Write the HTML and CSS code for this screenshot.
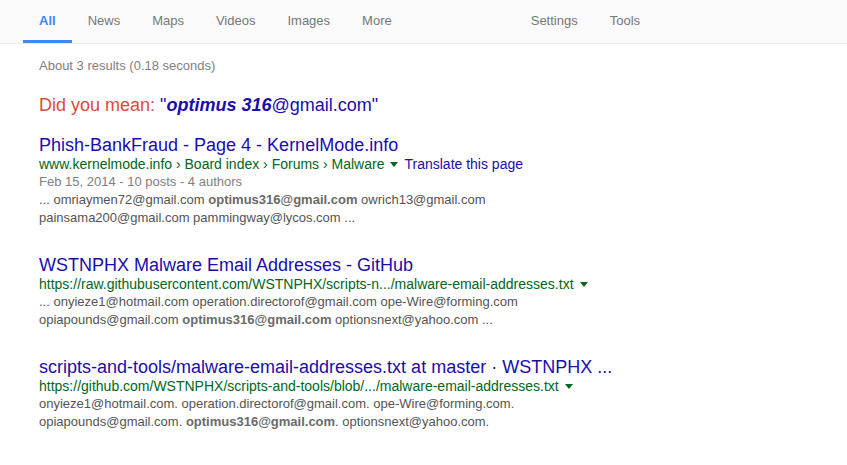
FILE: index.html
```html
<!DOCTYPE html>
<html>
<head>
<meta charset="utf-8">
<link rel="stylesheet" href="styles.css">
</head>
<body>
<div class="header">
  <nav class="tabs">
    <a class="tab active">All</a>
    <a class="tab">News</a>
    <a class="tab">Maps</a>
    <a class="tab">Videos</a>
    <a class="tab">Images</a>
    <a class="tab">More</a>
  </nav>
  <nav class="tabs right">
    <a class="tab">Settings</a>
    <a class="tab">Tools</a>
  </nav>
</div>
<div class="main">
  <div class="stats">About 3 results (0.18 seconds)</div>
  <div class="spell"><span class="red">Did you mean: </span><span class="sugg">"<b><i>optimus 316</i></b>@gmail.com"</span></div>

  <div class="result">
    <div class="title">Phish-BankFraud - Page 4 - KernelMode.info</div>
    <div class="url">www.kernelmode.info › Board index › Forums › Malware<span class="arrow"></span><span class="translate">Translate this page</span></div>
    <div class="st"><span class="date">Feb 15, 2014 - 10 posts - 4 authors</span></div>
    <div class="st">... omriaymen72@gmail.com <b>optimus316@gmail.com</b> owrich13@gmail.com<br>painsama200@gmail.com pammingway@lycos.com ...</div>
  </div>

  <div class="result">
    <div class="title">WSTNPHX Malware Email Addresses - GitHub</div>
    <div class="url">https://raw.githubusercontent.com/WSTNPHX/scripts-n.../malware-email-addresses.txt<span class="arrow"></span></div>
    <div class="st">... onyieze1@hotmail.com operation.directorof@gmail.com ope-Wire@forming.com<br>opiapounds@gmail.com <b>optimus316@gmail.com</b> optionsnext@yahoo.com ...</div>
  </div>

  <div class="result">
    <div class="title">scripts-and-tools/malware-email-addresses.txt at master · WSTNPHX ...</div>
    <div class="url">https://github.com/WSTNPHX/scripts-and-tools/blob/.../malware-email-addresses.txt<span class="arrow"></span></div>
    <div class="st">onyieze1@hotmail.com. operation.directorof@gmail.com. ope-Wire@forming.com.<br>opiapounds@gmail.com. <b>optimus316@gmail.com</b>. optionsnext@yahoo.com.</div>
  </div>
</div>
</body>
</html>
```

FILE: styles.css
```css
html, body {
  margin: 0;
  padding: 0;
  background: #fff;
  font-family: "Liberation Sans", Arial, sans-serif;
}

.header {
  display: flex;
  height: 43px;
  background: #fafafa;
  border-bottom: 1px solid #ebebeb;
  padding-left: 23px;
}

.tabs {
  display: flex;
}

.tabs.right {
  margin-left: 107px;
}

.tab {
  display: flex;
  align-items: center;
  padding: 0 16px;
  height: 40px;
  border-bottom: 3px solid transparent;
  font-size: 13px;
  color: #777;
}

.tab.active {
  color: #4285f4;
  font-weight: bold;
  border-bottom-color: #4285f4;
}

.main {
  padding-left: 39px;
}

.stats {
  margin-top: 13px;
  font-size: 13px;
  line-height: 18px;
  color: #808080;
}

.spell {
  margin-top: 19px;
  font-size: 18px;
  line-height: 22px;
  margin-bottom: 19px;
}

.red {
  color: #dd4b39;
}

.sugg {
  color: #1a0dab;
}

.result {
  margin-bottom: 28px;
}

.title {
  font-size: 18px;
  line-height: 20px;
  color: #1a0dab;
  white-space: nowrap;
}

.url {
  font-size: 14px;
  line-height: 18px;
  color: #006621;
  white-space: nowrap;
}

.arrow {
  display: inline-block;
  vertical-align: middle;
  margin: -2px 0 0 6px;
  width: 0;
  height: 0;
  border-top: 5px solid #006621;
  border-left: 4px solid transparent;
  border-right: 4px solid transparent;
}

.translate {
  color: #1a0dab;
  margin-left: 6px;
}

.st {
  font-size: 13px;
  line-height: 18px;
  color: #545454;
}

.st b {
  color: #6a6a6a;
}

.date {
  color: #808080;
}
```
